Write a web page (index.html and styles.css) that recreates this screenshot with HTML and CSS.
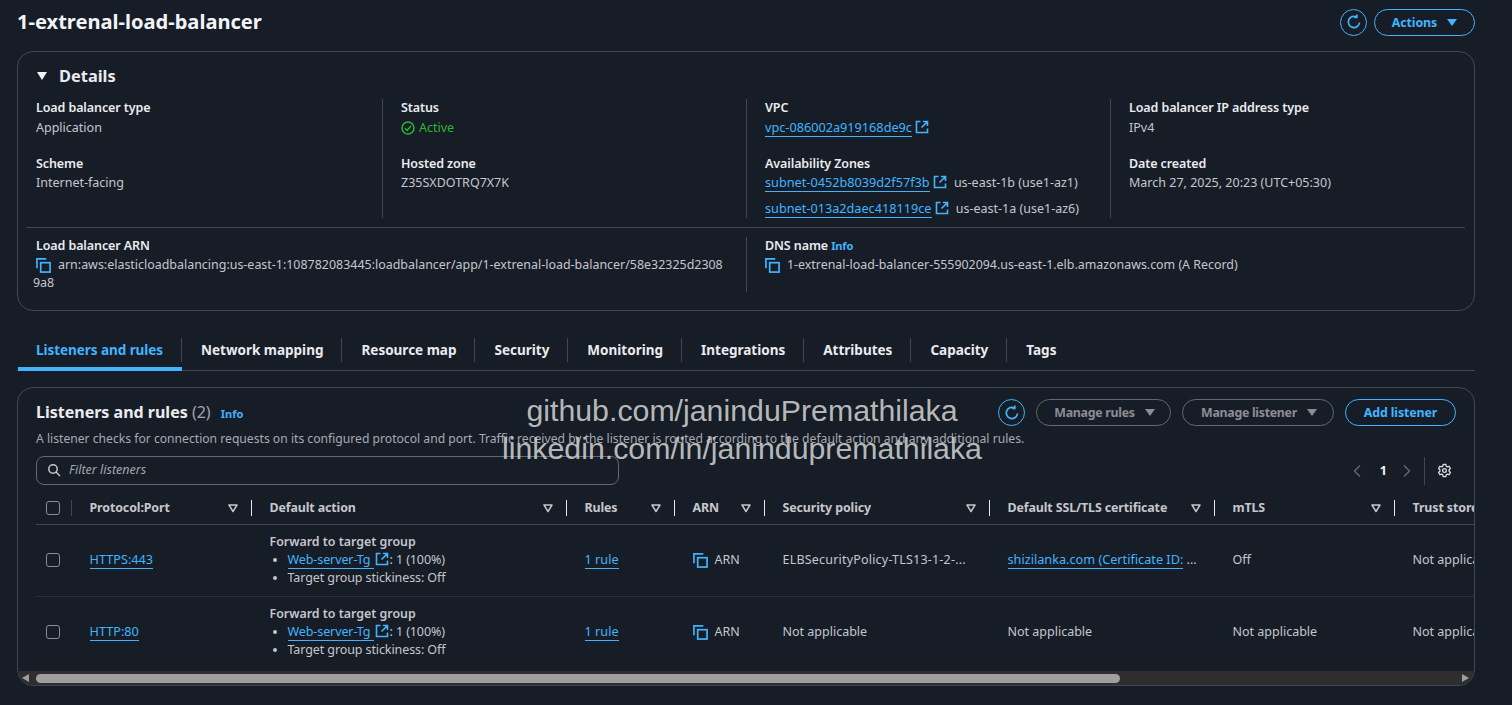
FILE: index.html
```html
<!DOCTYPE html>
<html lang="en">
<head>
    <meta charset="UTF-8">
    <title>1-extrenal-load-balancer</title>
    <link rel="stylesheet" href="styles.css">
</head>
<body>
    <svg class="sprite" xmlns="http://www.w3.org/2000/svg">
        <symbol id="i-ext" viewBox="0 0 14 14"><path d="M5.5 1.5H1.5v11h11V8.5M8 1.5h4.5V6M12.5 1.5 6.5 7.5" fill="none" stroke="currentColor" stroke-width="1.6"/></symbol>
        <symbol id="i-copy" viewBox="0 0 16 16"><path d="M1 11V1h10" fill="none" stroke="currentColor" stroke-width="1.8"/><rect x="5" y="5" width="10" height="10" fill="none" stroke="currentColor" stroke-width="1.8"/></symbol>
        <symbol id="i-refresh" viewBox="0 0 16 16"><path d="M13.5 8.5A5.6 5.6 0 1 1 10.6 3M10.8 0.6V3.4H8" fill="none" stroke="currentColor" stroke-width="1.7"/></symbol>
        <symbol id="i-sort" viewBox="0 0 10 10"><path d="M1 2h8L5 8.5Z" fill="none" stroke="currentColor" stroke-width="1.5" stroke-linejoin="round"/></symbol>
    </svg>

    <div class="page-head">
        <h1>1-extrenal-load-balancer</h1>
        <div class="head-actions">
            <button class="btn btn-icon btn-icon-sm"><svg class="i16"><use href="#i-refresh"/></svg></button>
            <button class="btn btn-actions">Actions <span class="caret"></span></button>
        </div>
    </div>

    <section class="card details">
        <h2 class="details-title"><span class="caret caret-white"></span>Details</h2>
        <div class="details-grid">
            <div class="col">
                <div class="kv"><div class="k">Load balancer type</div><div class="v">Application</div></div>
                <div class="kv"><div class="k">Scheme</div><div class="v">Internet-facing</div></div>
            </div>
            <div class="col">
                <div class="kv">
                    <div class="k">Status</div>
                    <div class="v active">
                        <svg class="i14" viewBox="0 0 14 14"><circle cx="7" cy="7" r="6" fill="none" stroke="currentColor" stroke-width="1.5"/><path d="M4 7.2 6.2 9.4 10 5" fill="none" stroke="currentColor" stroke-width="1.5"/></svg>
                        Active
                    </div>
                </div>
                <div class="kv"><div class="k">Hosted zone</div><div class="v">Z35SXDOTRQ7X7K</div></div>
            </div>
            <div class="col">
                <div class="kv">
                    <div class="k">VPC</div>
                    <div class="v"><a href="#">vpc-086002a919168de9c</a> <svg class="ext"><use href="#i-ext"/></svg></div>
                </div>
                <div class="kv">
                    <div class="k">Availability Zones</div>
                    <div class="v"><a href="#">subnet-0452b8039d2f57f3b</a> <svg class="ext"><use href="#i-ext"/></svg><span class="az">us-east-1b (use1-az1)</span></div>
                    <div class="v v-next"><a href="#">subnet-013a2daec418119ce</a> <svg class="ext"><use href="#i-ext"/></svg><span class="az">us-east-1a (use1-az6)</span></div>
                </div>
            </div>
            <div class="col col-4">
                <div class="kv"><div class="k">Load balancer IP address type</div><div class="v">IPv4</div></div>
                <div class="kv"><div class="k">Date created</div><div class="v">March 27, 2025, 20:23 (UTC+05:30)</div></div>
            </div>
        </div>
        <hr class="details-rule">
        <div class="details-grid details-bottom">
            <div class="col">
                <div class="k">Load balancer ARN</div>
                <div class="v arn"><svg class="copy"><use href="#i-copy"/></svg>arn:aws:elasticloadbalancing:us-east-1:108782083445:loadbalancer/app/1-extrenal-load-balancer/58e32325d2308<br>9a8</div>
            </div>
            <div class="col col-4">
                <div class="k">DNS name <a class="info" href="#">Info</a></div>
                <div class="v dns"><svg class="copy"><use href="#i-copy"/></svg>1-extrenal-load-balancer-555902094.us-east-1.elb.amazonaws.com (A Record)</div>
            </div>
        </div>
    </section>

    <nav class="tabs">
        <a class="tab tab-on" href="#"><span>Listeners and rules</span></a>
        <a class="tab" href="#"><span>Network mapping</span></a>
        <a class="tab" href="#"><span>Resource map</span></a>
        <a class="tab" href="#"><span>Security</span></a>
        <a class="tab" href="#"><span>Monitoring</span></a>
        <a class="tab" href="#"><span>Integrations</span></a>
        <a class="tab" href="#"><span>Attributes</span></a>
        <a class="tab" href="#"><span>Capacity</span></a>
        <a class="tab tab-last" href="#"><span>Tags</span></a>
    </nav>

    <section class="card listeners">
        <div class="watermark">github.com/janinduPremathilaka<br>linkedin.com/in/janindupremathilaka</div>

        <div class="list-head">
            <h2>Listeners and rules <span class="count">(2)</span> <a class="info" href="#">Info</a></h2>
            <div class="list-actions">
                <button class="btn btn-icon"><svg class="i16"><use href="#i-refresh"/></svg></button>
                <button class="btn btn-off btn-rules">Manage rules <span class="caret caret-off"></span></button>
                <button class="btn btn-off btn-listener">Manage listener <span class="caret caret-off"></span></button>
                <button class="btn btn-add">Add listener</button>
            </div>
        </div>
        <p class="desc">A listener checks for connection requests on its configured protocol and port. Traffic received by the listener is routed according to the default action and any additional rules.</p>

        <div class="tools">
            <div class="filter">
                <svg class="i14" viewBox="0 0 14 14"><circle cx="6" cy="6" r="4.2" fill="none" stroke="currentColor" stroke-width="1.5"/><path d="M9 9l4 4" stroke="currentColor" stroke-width="1.5"/></svg>
                <span>Filter listeners</span>
            </div>
            <div class="pager">
                <svg class="chev" viewBox="0 0 10 14"><path d="M8 1.5 2.5 7 8 12.5" fill="none" stroke="currentColor" stroke-width="1.4"/></svg>
                <b>1</b>
                <svg class="chev" viewBox="0 0 10 14"><path d="M2 1.5 7.500 7 2 12.500" fill="none" stroke="currentColor" stroke-width="1.4"/></svg>
                <span class="pager-sep"></span>
                <svg class="gear" viewBox="0 0 16 16"><path d="M6.600 1.500h2.800l.4 1.900 1.300.7 1.800-.6 1.400 2.400-1.400 1.300v1.600l1.400 1.300-1.400 2.400-1.800-.6-1.300.7-.4 1.900H6.600l-.4-1.900-1.300-.7-1.800.6-1.400-2.400 1.400-1.300V7.200L1.700 5.900l1.400-2.400 1.800.6 1.300-.7Z" fill="none" stroke="currentColor" stroke-width="1.400" stroke-linejoin="round"/><circle cx="8" cy="8" r="2" fill="none" stroke="currentColor" stroke-width="1.400"/></svg>
            </div>
        </div>

        <div class="table-wrap">
            <table>
                <colgroup>
                    <col class="w-check"><col class="w-proto"><col class="w-action"><col class="w-rules"><col class="w-arn"><col class="w-sec"><col class="w-ssl"><col class="w-mtls"><col class="w-trust">
                </colgroup>
                <thead>
                    <tr>
                        <th class="th-check"><div class="th-box th-box-dim"><span class="check"></span></div></th>
                        <th><div class="th-box">Protocol:Port<svg class="sort"><use href="#i-sort"/></svg></div></th>
                        <th><div class="th-box">Default action<svg class="sort"><use href="#i-sort"/></svg></div></th>
                        <th><div class="th-box">Rules<svg class="sort"><use href="#i-sort"/></svg></div></th>
                        <th><div class="th-box">ARN<svg class="sort"><use href="#i-sort"/></svg></div></th>
                        <th><div class="th-box">Security policy<svg class="sort"><use href="#i-sort"/></svg></div></th>
                        <th><div class="th-box">Default SSL/TLS certificate<svg class="sort"><use href="#i-sort"/></svg></div></th>
                        <th><div class="th-box">mTLS<svg class="sort"><use href="#i-sort"/></svg></div></th>
                        <th><div class="th-box th-box-last">Trust store</div></th>
                    </tr>
                </thead>
                <tbody>
                    <tr>
                        <td class="td-check"><span class="check"></span></td>
                        <td><a href="#">HTTPS:443</a></td>
                        <td class="action">
                            <div class="fwd">Forward to target group</div>
                            <ul>
                                <li><a href="#">Web-server-Tg </a><svg class="ext"><use href="#i-ext"/></svg>: 1 (100%)</li>
                                <li>Target group stickiness: Off</li>
                            </ul>
                        </td>
                        <td><a href="#">1 rule</a></td>
                        <td><svg class="copy"><use href="#i-copy"/></svg>ARN</td>
                        <td class="policy">ELBSecurityPolicy-TLS13-1-2-...</td>
                        <td><a href="#">shizilanka.com (Certificate ID:</a> ...</td>
                        <td>Off</td>
                        <td>Not applicable</td>
                    </tr>
                    <tr>
                        <td class="td-check"><span class="check"></span></td>
                        <td><a href="#">HTTP:80</a></td>
                        <td class="action">
                            <div class="fwd">Forward to target group</div>
                            <ul>
                                <li><a href="#">Web-server-Tg </a><svg class="ext"><use href="#i-ext"/></svg>: 1 (100%)</li>
                                <li>Target group stickiness: Off</li>
                            </ul>
                        </td>
                        <td><a href="#">1 rule</a></td>
                        <td><svg class="copy"><use href="#i-copy"/></svg>ARN</td>
                        <td>Not applicable</td>
                        <td>Not applicable</td>
                        <td>Not applicable</td>
                        <td>Not applicable</td>
                    </tr>
                </tbody>
            </table>
        </div>

        <div class="scrollbar">
            <span class="arrow arrow-left"></span>
            <span class="thumb"></span>
            <span class="arrow arrow-right"></span>
        </div>
    </section>
</body>
</html>
```

FILE: styles.css
```css
* {
    box-sizing: border-box;
}
html, body {
    height: 100%;
}
body {
    margin: 0;
    padding: 0 37px 0 17px;
    background: #161d26;
    color: #c6c6cd;
    font-family: 'Noto Sans', sans-serif;
    font-size: 12.5px;
    line-height: 18px;
    overflow: hidden;
}
a {
    color: #42b4ff;
    text-decoration: none;
    border-bottom: 1px solid #42b4ff;
}
.sprite {
    display: none;
}
.i14 {
    width: 14px;
    height: 14px;
    flex: none;
}
.i16 {
    width: 16px;
    height: 16px;
}
.ext {
    width: 14px;
    height: 14px;
    color: #42b4ff;
    vertical-align: -2px;
}
.copy {
    width: 15px;
    height: 15px;
    color: #42b4ff;
    vertical-align: -4px;
    margin-right: 7px;
}

/* page header */
.page-head {
    display: flex;
    justify-content: space-between;
    align-items: center;
    height: 51px;
    padding: 0 0 7px;
}
h1 {
    margin: 0;
    font-size: 20.1px;
    font-weight: 700;
    color: #f3f3f7;
}
.head-actions {
    display: flex;
    gap: 7px;
    align-items: center;
}
.btn {
    display: flex;
    align-items: center;
    justify-content: center;
    height: 27px;
    padding: 0;
    border: 1.5px solid #42b4ff;
    border-radius: 14px;
    background: none;
    color: #42b4ff;
    font-family: inherit;
    font-size: 12.4px;
    font-weight: 700;
    letter-spacing: -0.1px;
}
.btn-icon {
    width: 27px;
    border-radius: 50%;
}
.btn-actions {
    width: 101px;
    gap: 10px;
}
.caret {
    width: 0;
    height: 0;
    border-left: 5px solid transparent;
    border-right: 5px solid transparent;
    border-top: 7px solid #42b4ff;
}
.caret-white {
    display: inline-block;
    border-left-width: 5.5px;
    border-right-width: 5.5px;
    border-top: 8px solid #f3f3f7;
    margin-right: 12px;
    vertical-align: 2px;
}
.caret-off {
    border-top-color: #8c8c94;
}

/* cards */
.card {
    border: 1px solid #424650;
    border-radius: 16px;
}
.details {
    height: 260px;
    padding-top: 12px;
}
.details-title {
    margin: 0 0 0 19px;
    font-size: 16.4px;
    line-height: 24px;
    font-weight: 700;
    color: #ebebf0;
}
.details-grid {
    display: grid;
    grid-template-columns: 365px 364px 364px 1fr;
    margin-top: 11px;
    height: 119px;
}
.col {
    padding-left: 18px;
    border-right: 1px solid #424650;
}
.col-4 {
    border-right: none;
}
.col a:not(.info) {
    font-size: 12.7px;
    line-height: 1;
}
.kv {
    height: 56px;
}
.k {
    font-weight: 600;
    color: #ebebf0;
    line-height: 18px;
    letter-spacing: -0.1px;
}
.v {
    margin-top: 2px;
}
.kv + .kv .v {
    margin-top: 1px;
}
.kv + .kv .v-next {
    margin-top: 8px;
}
.active {
    display: flex;
    align-items: center;
    gap: 4px;
    color: #2bb534;
}
.az {
    margin-left: 7px;
}
.details-rule {
    margin: 9px 9px 9px 8px;
    border: none;
    border-top: 1px solid #424650;
}
.details-bottom {
    grid-template-columns: 729px 1fr;
    height: 55px;
    margin-top: 0;
}
.arn {
    margin: 1px 0 0 -3px;
    font-size: 12.45px;
}
.arn .copy {
    margin-left: 3px;
}
.dns {
    margin-top: 1px;
    font-size: 12.4px;
}
.info {
    border: none;
    color: #42b4ff;
    font-size: 11px;
    font-weight: 700;
}

/* tabs */
.tabs {
    display: flex;
    height: 45px;
    margin-top: 15px;
    border-bottom: 1px solid #424650;
}
.tab {
    display: block;
    border-bottom: none;
    color: #ebebf0;
    font-size: 13.5px;
    font-weight: 700;
    padding-top: 12px;
}
.tab span {
    display: block;
    height: 24px;
    padding: 0 18px 0 19px;
    border-right: 1px solid #424650;
    line-height: 24px;
}
.tab-last span {
    border-right: none;
}
.tab-on {
    width: 164px;
    height: 45px;
    margin-left: 1px;
    color: #42b4ff;
    border-bottom: 4px solid #42b4ff;
    border-radius: 3px 3px 0 0;
}
.tab-on span {
    padding: 0 0 0 18px;
    letter-spacing: -0.05px;
}

/* listeners */
.listeners {
    position: relative;
    height: 299px;
    margin-top: 16px;
    overflow: hidden;
}
.watermark {
    position: absolute;
    top: 4px;
    left: 464px;
    width: 520px;
    text-align: center;
    white-space: nowrap;
    color: rgba(205, 205, 205, 0.9);
    font-family: 'Liberation Sans', sans-serif;
    font-size: 30.3px;
    line-height: 38px;
    pointer-events: none;
}
.list-head {
    display: flex;
    justify-content: space-between;
    align-items: center;
    height: 27px;
    margin-top: 11px;
    padding: 0 18px 0 18px;
}
.list-head h2 {
    margin: 0;
    font-size: 16px;
    font-weight: 700;
    color: #ebebf0;
}
.count {
    font-weight: 400;
    color: #a4a4ad;
}
.list-head .info {
    margin-left: 6px;
}
.list-actions {
    display: flex;
    gap: 11px;
}
.btn-off {
    border: 1px solid #656871;
    color: #8c8c94;
    gap: 10px;
    padding-left: 2px;
    letter-spacing: -0.3px;
}
.btn-rules {
    width: 135px;
}
.btn-listener {
    width: 152px;
}
.btn-add {
    width: 111px;
}
.desc {
    margin: 4px 0 0 18px;
    color: #a9a9b2;
    font-size: 12.15px;
}
.tools {
    display: flex;
    justify-content: space-between;
    align-items: center;
    height: 29px;
    margin-top: 8px;
    padding-left: 18px;
}
.filter {
    display: flex;
    align-items: center;
    gap: 8px;
    width: 583px;
    height: 29px;
    padding: 0 0 2px 10px;
    border: 1px solid #656871;
    border-radius: 8px;
    color: #c6c6cd;
    font-style: italic;
}
.filter span {
    color: #a4a4ad;
}
.pager {
    display: flex;
    align-items: center;
    height: 29px;
    color: #656871;
}
.chev {
    width: 10px;
    height: 14px;
}
.pager b {
    margin: 0 15px 0 18px;
    color: #f3f3f7;
}
.pager-sep {
    width: 1px;
    height: 28px;
    margin: 0 12px;
    background: #424650;
}
.gear {
    width: 15px;
    height: 15px;
    margin-right: 22px;
    color: #dcdce2;
}

/* table */
.table-wrap {
    margin: 6px 0 0 18px;
    overflow: hidden;
}
table {
    width: 1564px;
    table-layout: fixed;
    border-collapse: collapse;
}
.w-check { width: 36px; }
.w-proto { width: 180px; }
.w-action { width: 315px; }
.w-rules { width: 108px; }
.w-arn { width: 90px; }
.w-sec { width: 225px; }
.w-ssl { width: 225px; }
.w-mtls { width: 180px; }
.w-trust { width: 205px; }
th {
    height: 33px;
    padding: 2px 0 0;
    border-bottom: 1px solid #424650;
    text-align: left;
    color: #c6c6cd;
    font-weight: 700;
    font-size: 12.4px;
    letter-spacing: -0.1px;
}
.th-box {
    display: flex;
    justify-content: space-between;
    align-items: center;
    height: 16px;
    padding: 0 13px 0 17.5px;
    border-right: 1px solid #e8e8ec;
}
.th-box-dim {
    border-right-color: #424650;
    padding: 0 0 0 10px;
}
.th-box-last {
    border-right: none;
}
.sort {
    width: 10px;
    height: 10px;
    color: #c6c6cd;
}
.check {
    display: block;
    width: 14px;
    height: 14px;
    border: 1.5px solid #8c8c94;
    border-radius: 3px;
}
td {
    height: 72px;
    padding: 0 0 0 17.5px;
    border-bottom: 1px solid #2a2f38;
    white-space: nowrap;
}
td a {
    font-size: 12.7px;
    line-height: 1;
}
tbody tr:last-child td {
    border-bottom: none;
}
.td-check {
    padding-left: 10px;
}
.policy {
    letter-spacing: 0.2px;
}
.fwd {
    font-weight: 600;
    font-size: 12.4px;
}
.action ul {
    margin: 0;
    padding: 0 0 0 18px;
    letter-spacing: -0.1px;
}
.action .ext {
    margin: 0 1px;
}
.action a {
    font-size: 12.5px;
}

/* horizontal scrollbar */
.scrollbar {
    position: absolute;
    left: 0;
    right: 0;
    bottom: 0;
    display: flex;
    align-items: center;
    height: 14px;
    background: #2e2e2e;
}
.thumb {
    width: 1084px;
    height: 9px;
    margin-left: 7px;
    border-radius: 5px;
    background: #9f9f9f;
}
.arrow {
    width: 0;
    height: 0;
    border-top: 4px solid transparent;
    border-bottom: 4px solid transparent;
}
.arrow-left {
    margin-left: 4px;
    border-right: 7px solid #9f9f9f;
}
.arrow-right {
    margin-left: auto;
    margin-right: 5px;
    border-left: 7px solid #9f9f9f;
}
```
